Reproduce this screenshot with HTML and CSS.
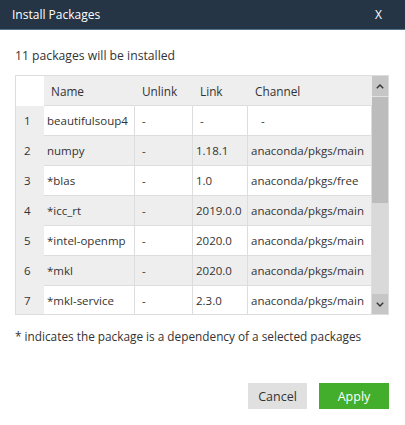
FILE: index.html
```html
<!DOCTYPE html>
<html>
<head>
<meta charset="utf-8">
<link rel="stylesheet" href="styles.css">
</head>
<body>
<div class="dialog">
  <div class="titlebar">
    <span class="title">Install Packages</span>
    <span class="close">X</span>
  </div>
  <div class="content">
    <div class="summary">11 packages will be installed</div>
    <div class="tablebox">
      <div class="tablearea">
        <div class="row head">
          <div class="cell num corner"></div>
          <div class="cell hd">Name</div>
          <div class="cell hd">Unlink</div>
          <div class="cell hd">Link</div>
          <div class="cell hd">Channel</div>
        </div>
        <div class="row odd">
          <div class="cell num">1</div>
          <div class="cell">beautifulsoup4</div>
          <div class="cell dash">-</div>
          <div class="cell dash">-</div>
          <div class="cell dash wide">-</div>
        </div>
        <div class="row even">
          <div class="cell num">2</div>
          <div class="cell">numpy</div>
          <div class="cell dash">-</div>
          <div class="cell">1.18.1</div>
          <div class="cell">anaconda/pkgs/main</div>
        </div>
        <div class="row odd">
          <div class="cell num">3</div>
          <div class="cell">*blas</div>
          <div class="cell dash">-</div>
          <div class="cell">1.0</div>
          <div class="cell">anaconda/pkgs/free</div>
        </div>
        <div class="row even">
          <div class="cell num">4</div>
          <div class="cell">*icc_rt</div>
          <div class="cell dash">-</div>
          <div class="cell">2019.0.0</div>
          <div class="cell">anaconda/pkgs/main</div>
        </div>
        <div class="row odd">
          <div class="cell num">5</div>
          <div class="cell">*intel-openmp</div>
          <div class="cell dash">-</div>
          <div class="cell">2020.0</div>
          <div class="cell">anaconda/pkgs/main</div>
        </div>
        <div class="row even">
          <div class="cell num">6</div>
          <div class="cell">*mkl</div>
          <div class="cell dash">-</div>
          <div class="cell">2020.0</div>
          <div class="cell">anaconda/pkgs/main</div>
        </div>
        <div class="row odd">
          <div class="cell num">7</div>
          <div class="cell">*mkl-service</div>
          <div class="cell dash">-</div>
          <div class="cell">2.3.0</div>
          <div class="cell">anaconda/pkgs/main</div>
        </div>
      </div>
      <div class="scrollbar">
        <div class="sbtn up">
          <svg width="8" height="5" viewBox="0 0 8 5"><polyline points="0.8,4.2 4,1 7.2,4.2" fill="none" stroke="#333" stroke-width="1.4"/></svg>
        </div>
        <div class="thumb"></div>
        <div class="track"></div>
        <div class="sbtn down">
          <svg width="8" height="5" viewBox="0 0 8 5"><polyline points="0.8,0.8 4,4 7.2,0.8" fill="none" stroke="#333" stroke-width="1.4"/></svg>
        </div>
      </div>
    </div>
    <div class="note">* indicates the package is a dependency of a selected packages</div>
    <div class="actions">
      <button class="btn cancel">Cancel</button>
      <button class="btn apply">Apply</button>
    </div>
  </div>
</div>
</body>
</html>
```
FILE: styles.css
```css
html, body {
  margin: 0;
  padding: 0;
  background: #ffffff;
}
body {
  width: 405px;
  height: 425px;
  overflow: hidden;
  font-family: "Open Sans", "Noto Sans", sans-serif;
  font-size: 12px;
  color: #333333;
}
.dialog {
  width: 405px;
  height: 425px;
  display: flex;
  flex-direction: column;
}
.titlebar {
  height: 29px;
  border-bottom: 1px solid #52718a;
  background: #253546;
  color: #ffffff;
  display: flex;
  align-items: center;
  justify-content: space-between;
  padding: 0 23px 0 12px;
  font-size: 12px;
}
.content {
  padding: 0 16px 0 15px;
  display: flex;
  flex-direction: column;
}
.summary {
  margin-top: 17px;
  height: 18px;
  line-height: 18px;
  font-size: 12.2px;
}
.tablebox {
  margin-top: 10px;
  height: 238px;
  border: 1px solid #dddddd;
  display: flex;
}
.tablearea {
  width: 356px;
  height: 238px;
  overflow: hidden;
}
.row {
  display: grid;
  grid-template-columns: 28px 91px 58px 55px 124px;
  height: 30px;
  font-size: 11.5px;
}
.row.head { font-size: 11.8px; }
.cell {
  box-sizing: border-box;
  border-right: 1px solid #dddddd;
  border-bottom: 1px solid #dddddd;
  display: flex;
  align-items: center;
  padding-left: 3px;
  white-space: nowrap;
  overflow: hidden;
}
.row.odd .cell { background: #ffffff; }
.row.even .cell { background: #eeeeee; }
.row .cell.num {
  background: #eeeeee;
  padding-left: 8px;
  border-right-color: #eeeeee;
  border-bottom-color: #eeeeee;
}
.row.head .cell {
  background: #eeeeee;
  border-right-color: #eeeeee;
}
.row.head .cell.hd { padding-left: 7px; }
.row.head .cell.corner {
  background: #ffffff;
  border-right-color: #ffffff;
  border-bottom-color: #ffffff;
}
.cell.dash { padding-left: 7px; }
.cell.dash.wide { padding-left: 13px; }
.scrollbar {
  width: 16px;
  height: 238px;
  display: flex;
  flex-direction: column;
  background: #d9d9d9;
}
.sbtn {
  height: 20px;
  background: #c6c6c6;
  display: flex;
  align-items: center;
  justify-content: center;
}
.sbtn.up { border-bottom: 1px solid #e2e2e2; }
.thumb {
  height: 106px;
  background: #bcbcbc;
}
.track { flex: 1; }
.note {
  margin-top: 12px;
  height: 18px;
  line-height: 18px;
  font-size: 11.8px;
}
.actions {
  margin-top: 38px;
  display: flex;
  justify-content: flex-end;
  gap: 12px;
}
.btn {
  border: none;
  height: 26px;
  font-family: "Open Sans", "Noto Sans", sans-serif;
  font-size: 12.5px;
  padding: 0;
}
.cancel {
  width: 59px;
  background: #e0e0e0;
  color: #333333;
}
.apply {
  width: 70px;
  background: #42ae2b;
  color: #ffffff;
}
```
